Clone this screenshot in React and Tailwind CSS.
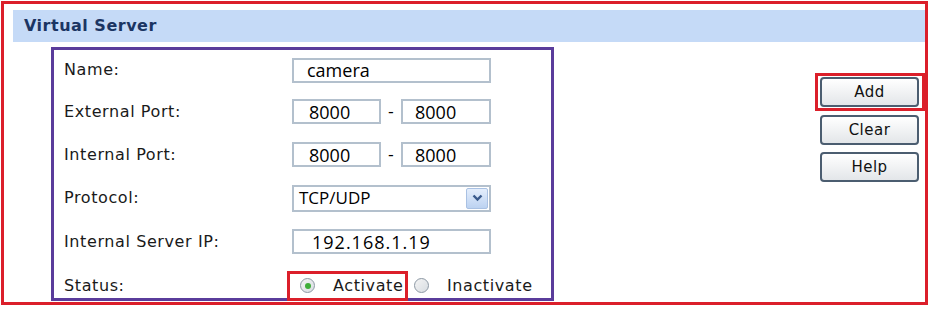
import React from "react";

const label = "text-[16px] tracking-[0.6px] text-[#1a1a1a]";
const valueFont = { fontFamily: '"Open Sans", "Noto Sans", sans-serif' };

const TextBox = ({ value, className = "", textClass = "" }) => (
  <div
    className={`h-[25px] border-2 border-[#b3c0cd] bg-white flex items-center text-[18px] text-black leading-none ${className}`}
    style={valueFont}
  >
    <span className={textClass}>{value}</span>
  </div>
);

const Radio = ({ checked }) => (
  <span className="w-[15px] h-[15px] rounded-full border border-[#8c98a4] bg-gradient-to-br from-[#f4f4f4] to-[#d8dde2] flex items-center justify-center">
    {checked && <span className="w-[6px] h-[6px] rounded-full bg-[#3fae3a]" />}
  </span>
);

const Btn = ({ children, className = "" }) => (
  <button
    className={`w-[99px] h-[30px] rounded-[4px] border-2 border-[#4b5d70] bg-gradient-to-b from-white to-[#e3e6e9] text-[15px] tracking-[0.5px] text-[#111] ${className}`}
  >
    {children}
  </button>
);

const Row = ({ name, h, children, extra = "" }) => (
  <div className={`flex items-center ${h} ${extra}`}>
    <div className={`w-[228px] ${label}`}>{name}</div>
    {children}
  </div>
);

export default function App() {
  return (
    <div
      className="w-[932px] h-[309px] bg-white overflow-hidden"
      style={{ fontFamily: '"DejaVu Sans", Verdana, sans-serif' }}
    >
      <div className="ml-px mt-px w-[927px] h-[304px] border-[3px] border-[#db1f2a] flex flex-col">
        <div className="ml-[9px] mt-[6px] h-[32px] bg-[#c5daf7] flex items-center pl-[11px]">
          <span className="text-[16px] font-bold tracking-[0.5px] text-[#1b3563]">Virtual Server</span>
        </div>

        <div className="flex mt-[5px]">
          <div className="ml-[47px] w-[503px] h-[254px] border-[3px] border-[#5a3c9b] pl-[10px] flex flex-col">
            <Row name="Name:" h="h-[40px]">
              <TextBox value="camera" className="w-[199px] pl-[13px]" />
            </Row>
            <Row name="External Port:" h="h-[43px]">
              <TextBox value="8000" className="w-[89px] pl-[15px]" />
              <span className="w-[20px] text-center text-[16px]">-</span>
              <TextBox value="8000" className="w-[90px] pl-[12px]" />
            </Row>
            <Row name="Internal Port:" h="h-[43px]">
              <TextBox value="8000" className="w-[89px] pl-[15px]" />
              <span className="w-[20px] text-center text-[16px]">-</span>
              <TextBox value="8000" className="w-[90px] pl-[12px]" />
            </Row>
            <Row name="Protocol:" h="h-[44px]">
              <div
                className="w-[199px] h-[27px] border-2 border-[#b3c0cd] bg-white flex items-center justify-between pl-[5px] pr-px text-[17px] text-black"
                style={valueFont}
              >
                <span>TCP/UDP</span>
                <span className="w-[22px] h-[21px] rounded-[2px] border border-[#a9c1e3] bg-gradient-to-b from-[#e4eefc] to-[#bcd2f1] flex items-center justify-center">
                  <svg width="11" height="8" viewBox="0 0 11 8">
                    <path d="M1.5 1.5 L5.5 5.5 L9.5 1.5" fill="none" stroke="#3a5a8c" strokeWidth="2.4" />
                  </svg>
                </span>
              </div>
            </Row>
            <Row name="Internal Server IP:" h="h-[43px]">
              <TextBox value="192.168.1.19" className="w-[199px] pl-[18px]" textClass="tracking-[1px]" />
            </Row>
            <Row name="Status:" h="h-[35px]" extra="pt-[10px]">
              <div className="ml-[-5px] h-[30px] w-[121px] border-[3px] border-[#db1f2a] flex items-center pl-[10px]">
                <Radio checked />
                <span className={`ml-[18px] ${label}`}>Activate</span>
              </div>
              <span className="ml-[6px]">
                <Radio />
              </span>
              <span className={`ml-[18px] ${label}`}>Inactivate</span>
            </Row>
          </div>

          <div className="ml-[261px] mt-[26px] flex flex-col">
            <div className="w-[110px] h-[38px] border-[3px] border-[#db1f2a] flex items-center pl-[2px]">
              <Btn>Add</Btn>
            </div>
            <Btn className="ml-[5px] mt-[4px]">Clear</Btn>
            <Btn className="ml-[5px] mt-[7px]">Help</Btn>
          </div>
        </div>
      </div>
    </div>
  );
}
